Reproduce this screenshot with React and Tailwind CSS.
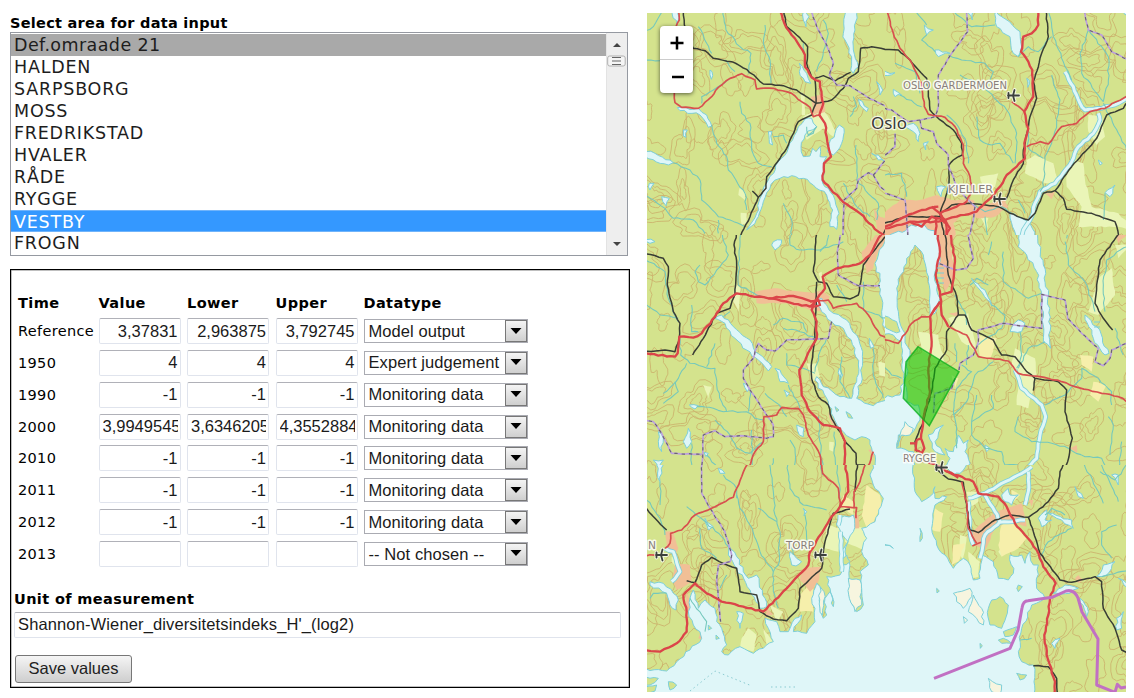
import React from "react";

const areas = ["Def.omraade 21", "HALDEN", "SARPSBORG", "MOSS", "FREDRIKSTAD", "HVALER", "RÅDE", "RYGGE", "VESTBY", "FROGN"];

const rows = [
  ["Reference", "3,37831", "2,963875", "3,792745", "Model output"],
  ["1950", "4", "4", "4", "Expert judgement"],
  ["1990", "-1", "-1", "-1", "Monitoring data"],
  ["2000", "3,9949545", "3,6346205", "4,3552884", "Monitoring data"],
  ["2010", "-1", "-1", "-1", "Monitoring data"],
  ["2011", "-1", "-1", "-1", "Monitoring data"],
  ["2012", "-1", "-1", "-1", "Monitoring data"],
  ["2013", "", "", "", "-- Not chosen --"],
];

/* ---------- map geometry: six tiles, three units per pixel ---------- */

const tiles = [
  {
    x: 640, y: 0, w: 735, h: 705,
    pale: ["490,350 545,325 570,360 585,390 580,410 550,385 500,420 488,400", "483,275 495,285 495,345 485,345", "300,560 318,580 315,600 295,585", "302,638 320,640 320,670 305,675"],
    pink: ["512,290 550,282 556,335 520,345", "700,625 720,650 750,655 750,705 715,700"],
    water: [
      "495,357 470,395 445,445 415,485 385,540 360,595 350,640 320,690 335,678 355,650 370,605 393,553 420,535 455,527 490,535 520,555 560,585 578,630 570,680 590,688 597,640 585,600 565,565 548,550 550,490 560,470 540,470 540,440 528,455 518,445 510,468 490,470 483,440 495,405 530,380 515,355",
      "598,375 612,385 605,430 580,465 562,455 568,430 585,400",
      "618,30 655,30 645,90 640,150 655,200 640,220 632,210 635,170 615,120 610,100",
      "112,323 175,325 200,345 215,378 205,382 180,345 120,332",
      "95,30 120,30 110,75", "22,453 45,460 100,488 85,495 22,465",
      "385,395 396,395 398,435 388,430", "65,590 88,595 78,617", "492,40 507,50 498,80 490,60",
      "478,190 500,220 512,250 495,245 478,215", "655,298 685,325 680,335 660,315", "130,390 142,390 138,412 130,408", "210,210 216,215 214,238",
      "710,245 728,270 720,285", "695,460 715,465 735,485 715,480", "28,550 42,550 30,570",
    ],
    rivers: ["250,40 258,90 300,140 333,160 325,220", "375,75 370,130 390,180 393,250", "175,80 200,130 215,160", "550,60 565,100 545,180 530,215", "22,180 60,182", "185,310 185,290 220,270 270,235", "300,305 305,340 330,370 335,450 355,490 395,500", "215,375 230,430 260,470 265,510 315,580 320,630", "100,488 150,510 180,540 185,600 235,650 315,680", "22,580 75,625 100,655 160,660 195,700", "235,700 235,660", "400,410 430,405 440,430", "648,435 650,540 715,610 710,660", "610,550 650,620 690,650", "430,610 455,660 455,705", "70,40 40,80 22,100", "490,130 497,180", "255,180 285,215", "500,380 505,405 530,380 520,400 500,410", "640,290 650,320 630,350"],
    rail: ["130,40 133,75 160,145 195,152 220,175 275,185 320,208 370,252 430,257 470,270 528,310", "528,310 525,240 515,232 500,190 503,140 470,105 440,80 430,40", "528,310 575,300 610,265 625,235 655,215 662,145 695,140 750,150", "525,235 550,227 585,243 632,217", "528,310 515,345 475,365 440,445 405,495 380,530 378,565 355,592 330,650 295,705", "355,592 337,573", "715,705 750,672"],
    dash: ["512,40 535,90 560,135 580,190 568,225 590,255 630,257 680,290 750,325", "750,580 720,560 700,525 685,518 655,540 650,565 612,600 608,705", "700,525 750,462"],
    road: ["418,40 433,70 455,105 480,140 495,165 495,200 515,232 540,245 545,290 550,310 538,345 555,370 560,410 565,440 573,470 552,490 548,540 570,565 610,607 660,640 715,695 750,705"],
    minor: ["115,40 118,60 105,90 103,280 105,308 125,322 175,325 215,290 235,262 270,235 305,221 345,240 350,267 400,265 455,280 485,305 510,322 520,350 540,345"],
  },
  {
    x: 885, y: 0, w: 723, h: 705,
    pale: ["425,480 450,465 505,490 520,545 480,550 420,520", "570,480 595,490 600,540 620,620 700,640 750,690 700,680 580,680 590,620 545,560 545,510", "610,345 650,350 660,410 635,435 610,395", "285,530 340,520 330,560 300,580", "285,650 310,655 305,690"],
    pink: ["0,650 45,600 105,600 155,585 200,600 265,600 280,620 360,600 370,620 330,650 280,655 240,640 205,670 215,705 60,705 0,705", "480,580 510,575 500,598"],
    water: ["333,30 350,50 405,95 410,140 400,170 385,160 375,110 335,80", "240,30 265,30 262,60", "118,75 145,90 125,105", "150,150 195,160 160,170", "25,268 50,285 30,290", "155,560 182,560 168,590", "60,380 85,370 105,400 100,425 85,395", "375,640 430,665 458,705 395,705", "0,705 30,698 62,692 80,675 118,675 128,688 148,692 150,705", "660,578 690,555 675,590", "115,430 130,425 122,450", "425,235 432,240 428,262", "640,480 652,490 645,495", "0,215 30,218 0,230", "708,30 722,30 722,55"],
    wide: ["640,340 645,360 625,400 580,440 560,485 510,550 465,575 450,610 440,650 415,690 410,705", "722,290 700,310 650,325 600,330 585,310 565,260 540,215"],
    rivers: ["85,40 125,75", "125,105 110,120 150,155", "190,165 230,180 300,190 325,215 310,250", "225,225 260,240 310,275 365,330 395,400 390,490", "275,350 285,420 320,435 345,430 385,490", "400,170 430,140 460,155 500,110", "505,110 540,200 560,240", "500,225 525,300 515,370 500,430 480,470 475,560 465,575", "430,390 430,445 475,475", "490,40 505,110", "610,90 585,160 590,220 655,305", "610,90 670,170 670,240 655,305", "655,310 700,400 722,475", "0,525 50,520 65,590", "30,190 90,215 105,280", "195,40 260,80 330,75", "45,285 110,320", "185,345 220,380 245,430 250,490", "660,580 655,660", "400,600 420,640", "300,650 310,705", "380,640 350,620 300,635 260,610"],
    rail: ["0,148 40,150 75,180 125,235 135,330 155,350 205,390 230,430 232,465 205,480 192,495 192,555 180,600 165,640 200,615 250,610 340,620 375,640 430,660 450,640 475,580 510,572 535,595 545,628 620,640 690,665 705,705", "510,572 560,500 635,415 665,345 715,325 722,290", "483,40 490,110 470,160 460,200 445,245 455,295 435,350 415,450 415,490 385,540 362,600", "165,650 60,650 0,675", "165,640 180,705"],
    dash: ["245,40 248,95 200,160 160,225 160,320 150,350 105,360 70,365 20,330 0,322", "105,360 110,385 145,395 155,430 190,465 190,495 215,560 250,600 270,620 265,660 250,705", "597,40 610,90 650,105 680,155 722,185", "0,480 30,440 30,400", "0,575 60,600 70,705"],
    road: ["460,40 460,75 440,100 415,110 408,155 430,185 442,210 445,290 418,335 430,385 418,430 420,475 395,500 365,525 345,560 310,600 275,635 215,650 160,665 75,665 0,690", "0,690 60,650 110,630 160,620", "75,665 110,680 140,650 180,660 190,705", "150,705 155,650", "140,620 165,640 195,685 175,705", "245,605 215,620 165,640 180,670"],
    minor: ["22,40 25,100 45,145 75,180 95,220 110,250 118,320 130,343 180,352 210,380 235,435 235,490 255,530 262,570 245,605", "380,305 418,335", "425,440 465,425 490,432 530,380 575,370 615,335 660,325 722,280"],
  },
  {
    x: 640, y: 235, w: 735, h: 690,
    pale: ["285,140 302,160 295,230 280,200", "500,385 530,385 540,425 515,440", "190,450 215,455 205,490", "715,380 735,385 735,425 718,420", "568,620 582,622 580,650 568,645", "535,115 545,110 545,160"],
    pink: ["345,170 400,160 520,175 545,165 570,185 545,230 510,225 440,205 350,205", "665,50 720,0 750,0 735,20 710,60 700,100 680,115", "565,530 585,560 600,580 575,565", "685,645 710,640 700,670"],
    water: [
      "750,0 735,20 715,60 705,85 708,110 720,115 715,150 725,190 728,270 740,285 750,290",
      "525,200 545,190 560,210 580,235 620,255 650,300 668,350 665,420 650,490 700,512 750,490 770,705 700,705 705,660 690,615 665,605 645,615 610,590 580,545 565,500 525,435 530,425 550,455 600,485 635,490 650,440 655,390 645,340 610,280 575,260 545,230",
      "225,250 245,240 280,275 330,315 345,350 395,395 385,408 355,375 320,345 285,310 255,265", "405,400 420,405 445,445 420,440", "400,20 425,15 418,35 405,45 395,30", "55,590 70,610 65,650 55,620", "145,580 155,620 140,640 130,620", "148,510 175,512 165,522", "470,570 492,580 490,605 478,600", "688,310 702,335 692,340", "310,445 328,460 322,470", "40,675 70,675 55,700", "22,5 45,20 30,25", "432,465 448,475 440,485", "598,400 608,420 600,435", "192,652 205,655 198,665",
    ],
    islands: ["618,530 638,550 625,548", "585,515 597,525 590,530"],
    rivers: ["22,65 75,110 85,190 115,260", "22,195 60,240 115,250", "240,0 265,60 240,95 195,150 175,140 165,110 180,90", "300,0 297,60 295,150 350,180 380,190", "450,0 450,30 480,45 540,45 580,30 610,20", "155,210 155,290 175,290", "120,310 122,360 150,385 190,395 225,400 230,450 245,500 260,530", "225,325 200,395", "140,385 115,430 70,475", "105,440 115,470 70,505", "170,515 220,520 250,530 320,530 345,550 370,555", "375,475 425,520 440,545", "440,355 440,390 490,400 525,415", "400,270 430,250 490,265 500,290", "430,280 480,290 530,310", "525,410 540,350 560,310", "605,365 600,440 630,490", "700,340 700,420 730,490", "590,150 620,200", "670,140 670,225 750,255", "225,555 270,600 290,640 330,655 370,620", "155,625 155,700", "200,660 250,705", "450,615 465,640 465,705", "535,545 540,620 550,705", "583,590 585,705", "445,450 480,520", "330,465 325,530", "335,585 340,705", "270,230 250,245", "390,705 400,670", "570,0 560,30 540,50"],
    rail: ["293,0 282,30 290,90 285,175 270,220 230,235 190,310 158,360", "22,52 70,70 85,95 82,150 100,230 120,265 118,310 105,350 75,345 22,350", "530,0 525,60 520,110 535,140 560,145 580,185 630,192 655,180 670,90 700,50 735,5", "530,140 525,310 515,380 515,430 535,485 565,510 575,550 620,625 648,655 650,705", "650,690 675,690"],
    dash: ["605,0 592,50 595,120 655,152 720,152", "575,260 565,310 440,315 405,348 380,345 355,325 345,350 340,370 310,405 310,430 330,465 370,525 400,570 400,605 380,610 300,602 255,605 225,587 190,600 185,705", "22,553 40,560 65,595 95,655 185,658"],
    road: ["22,355 105,365 113,355 118,305 160,308 185,295 225,245 250,205 290,175 385,190 460,183 525,200 515,225 530,260 530,310 500,365 478,405 485,480 510,530 550,570 600,580 615,620 612,705", "385,190 450,203 510,215 525,200 555,160 548,125 590,100 660,85 690,60 710,20 730,0", "510,200 535,195 540,210 512,215"],
    minor: ["525,200 565,195 580,220 620,210 650,205 685,240 720,300 750,310", "320,705 345,650 370,620 372,545 410,540 425,518 475,520 490,540 505,600 540,660 545,705", "700,650 675,705"],
  },
  {
    x: 885, y: 235, w: 723, h: 690,
    pale: ["100,290 160,300 165,330 180,385 110,345", "190,250 250,235 265,300 275,350 230,320", "390,340 450,370 455,420 430,520 395,510 400,440 380,390", "640,130 680,100 690,180 640,240 610,230", "190,25 205,70 200,90", "690,30 722,30 700,70"],
    yellow: ["280,300 335,310 315,375 285,365", "585,360 625,365 620,410 590,390", "625,440 665,450 640,500 615,480", "200,420 220,430 210,460"],
    pink: ["150,0 220,0 195,30 210,120 180,170 160,100", "190,235 220,230 220,245", "555,640 575,630 575,655", "690,0 722,0 700,25"],
    water: [
      "0,0 150,0 165,30 165,80 150,110 155,165 165,190 150,235 135,240 130,140 115,60 90,30 65,70 35,160 40,230 60,310 75,360 60,430 65,500 100,510 105,555 85,590 40,600 35,640 85,650 90,720 0,720 0,490 45,480 55,430 50,320 25,300 0,290",
      "400,0 455,0 475,90 490,180 497,340 475,320 470,180 455,110 425,60 400,35", "260,130 285,165 320,212 300,165", "375,290 400,255 420,265 410,290 385,290", "600,240 635,275 672,355 660,360 625,310",
      "205,650 220,600 235,625 250,615 240,650 255,685 240,720 170,705 195,670 180,640", "300,630 315,640 305,650", "130,600 175,570 150,620 180,660 150,650",
    ],
    islands: ["0,235 35,260 45,290 25,290 0,265"],
    cream: ["60,560 85,580 75,600 50,600 38,635 45,600"],
    wide: ["390,405 410,460 470,510 482,545 465,600 455,670 410,705"],
    rivers: ["355,50 355,140 400,170 430,190 470,175", "210,180 240,230 245,270", "255,150 275,130 310,150", "320,210 360,240 350,280 280,330", "540,20 550,90 600,140 630,230", "722,25 665,75 655,150 660,230", "690,280 715,360", "405,290 410,360 395,400", "480,320 430,340 400,400", "230,390 260,410 215,460 205,530 215,580 215,640", "325,380 270,420 245,500 205,540", "320,480 325,520 260,560 260,600 300,640 350,650 360,690 400,690", "400,545 390,590 440,620 500,625 550,640 600,665 650,670 675,705", "590,400 590,430 540,480 480,510", "590,400 640,430 680,470 680,510", "670,545 685,570 675,660", "0,380 20,420 50,430", "210,325 215,380", "250,330 245,390", "275,480 260,560", "710,620 700,700", "545,10 555,0", "320,20 310,60"],
    rail: ["180,0 190,120 215,185 220,240 240,240 260,285 325,315 350,360 390,365 425,410 450,430 520,440 545,465 540,530 562,610 548,680 530,705", "220,240 185,290 185,345 150,400 140,470 115,560 90,620 95,650", "450,430 445,467", "710,0 645,75 635,150 630,205 655,250 683,285"],
    dash: ["245,0 265,70 245,100 210,105 160,85", "222,405 225,385 265,360 280,320 280,285 355,265 470,280 470,178 540,195 548,250 590,295 640,340 630,380 655,392 675,370 680,345 722,318", "210,430 200,460 150,475 145,535"],
    road: ["155,0 165,50 152,120 165,170 170,240 190,275", "195,0 210,80 200,170 165,180", "165,200 135,245 140,320 130,400 135,470 115,550 108,610 118,640 110,655 92,645 95,615 108,610", "90,625 75,625", "130,683 155,692"],
    minor: ["0,310 40,325 80,265 110,245 135,245 165,200", "190,275 245,300 280,365 370,378 400,415 465,425 530,440 570,455 650,475 700,485 722,505"],
  },
  {
    x: 640, y: 465, w: 735, h: 681,
    pale: ["625,180 680,190 680,260 615,230", "560,180 600,190 595,260 555,250", "325,490 350,510 340,560 300,550 305,520", "370,490 400,530 380,540", "95,275 110,290 120,320 95,290", "390,420 430,440 410,470"],
    yellow: ["680,60 720,90 725,120 700,175 680,190 665,150", "480,390 520,350 520,440 480,440", "610,90 640,110 640,150 605,125"],
    pink: ["75,200 100,200 115,250 105,270 80,245", "105,295 150,300 155,350 110,375 98,345", "490,310 545,305 535,350 510,380 480,345", "640,150 655,150 658,190 635,190", "380,430 400,450 375,455", "140,380 155,440 135,440", "180,500 190,525 175,520"],
    water: [
      "22,615 80,618 110,590 150,555 185,520 180,500 160,480 145,440 150,400 160,375 175,430 195,405 225,430 230,470 245,490 260,540 245,560 265,570 300,545 340,565 370,550 400,530 385,490 375,460 410,470 420,500 445,500 465,460 485,450 460,500 500,505 525,470 525,430 515,400 530,355 545,380 540,420 550,460 560,450 555,400 570,380 580,425 570,370 560,335 600,330 610,280 600,260 625,230 590,180 600,160 640,150 640,200 615,260 630,300 630,400 650,440 670,420 665,370 660,320 685,300 665,260 680,220 665,190 705,170 730,100 700,60 690,30 705,0 770,0 770,700 0,700",
      "30,350 70,355 100,385 115,405 108,435 90,420 80,385 30,360", "265,240 290,275 325,340 350,330 375,400 380,425 360,430 330,375 290,310 265,270", "195,160 220,185 205,195", "450,260 470,280 485,290 468,303 455,300", "490,130 500,140 492,152", "45,0 70,0 60,50", "235,10 255,25 240,25", "290,440 310,445 300,490",
    ],
    islands: ["22,640 55,640 30,660 22,660", "22,668 50,660 45,678 22,690", "85,650 110,660 90,675", "205,480 215,490 205,495", "228,510 238,520 228,523", "620,270 600,290 605,300 630,290"],
    cream: ["625,340 660,345 665,420 645,440 628,400", "540,365 552,380 548,450 540,430"],
    wide: ["75,250 100,260 120,320 95,350", "600,150 595,180", "602,200 605,320"],
    rivers: ["22,80 60,160 75,210", "290,90 300,130 330,180 360,260 400,320 400,380 415,430", "385,0 400,80 405,150 420,200 415,300 400,320", "440,0 450,70 490,120 560,135", "355,130 410,170", "60,50 60,120", "250,30 290,70 290,100", "140,125 190,165 245,215 265,245", "180,190 185,250 230,280", "590,0 600,100", "495,150 505,250", "450,230 460,270", "150,400 200,470 195,500", "260,330 240,370", "540,0 548,30", "30,400 40,385 80,385"],
    rail: ["22,115 45,160 80,195", "140,347 165,353 185,300 215,277 250,295 290,310 300,380 350,390 360,440 400,462 440,467 475,430 480,370 545,310 555,230 580,145 630,132", "655,0 648,40 645,80", "650,0 675,0"],
    dash: ["185,0 185,85 210,130 255,200 275,270 270,290 235,300 230,350 242,470"],
    road: ["615,0 625,80 600,125 575,155 545,205 510,260 505,300 440,370 370,440 310,425 245,410 200,385 165,355 130,390 140,440 140,500 110,535 60,560 22,555"],
    minor: ["325,0 290,70 280,97 225,125 165,150 125,195 92,205 90,235 75,250", "22,272 55,270", "545,0 548,25 595,70 600,125 650,128 648,160", "680,0 660,50 642,80 642,130"],
  },
  {
    x: 885, y: 465, w: 723, h: 681,
    pale: ["250,260 285,290 280,335 260,340", "245,80 275,80 280,110 255,125", "340,260 355,240 350,275", "225,210 245,215 235,290 225,270"],
    yellow: ["350,180 375,165 425,220 400,250 350,275 340,240", "150,130 175,145 165,200 140,195", "205,240 240,235 220,290 200,300", "380,75 405,90 385,110"],
    pink: ["250,210 325,145 380,125 410,115 425,185 375,165 330,190 300,255 270,240 245,215", "430,105 445,105 440,125", "570,340 580,330 595,345 580,355"],
    water: [
      "0,0 85,0 90,80 110,110 145,85 150,65 150,100 185,95 150,120 140,190 155,240 180,270 205,310 235,280 255,300 265,345 285,340 290,270 325,290 340,340 370,345 385,325 375,270 410,270 420,295 435,260 445,300 460,300 455,370 480,400 440,420 410,490 400,560 410,590 445,600 450,700 0,700",
      "460,160 485,135 480,165 500,165 470,185", "490,145 560,165 565,190 530,165", "635,335 655,300 690,290 665,330", "700,340 720,350 722,385", "695,460 715,440 710,490 695,495", "585,400 610,440 605,455", "500,535 525,520 510,550", "500,385 540,360 580,370 555,385", "570,65 595,100 580,95", "680,40 700,30 700,60", "350,90 370,70 375,90 400,90 380,120 360,110", "170,0 248,0 225,25 205,30",
    ],
    cream: ["205,385 255,370 260,395 235,430 215,410", "265,390 290,430 295,480 275,460 250,440", "310,640 350,660 345,690 320,680", "235,455 248,465 238,475"],
    islands: ["320,405 345,395 370,420 350,490 315,480 310,430", "355,500 395,485 385,510 360,515", "395,625 425,630 405,645", "400,360 412,365 400,380", "105,190 112,220 105,230", "155,370 163,378 156,384", "285,535 292,542 286,550", "0,235 25,250 5,240", "340,525 355,520 380,535 350,535"],
    wide: ["250,100 300,85 350,55 400,40 440,5", "300,90 330,140 345,170 300,210 285,280", "430,20 430,80 420,120", "250,110 255,200 265,240", "345,172 420,165"],
    rivers: ["460,280 490,230 530,205 560,190", "590,0 640,80 655,115", "640,0 700,110", "645,20 690,45 722,0", "695,180 650,200 650,240 680,280", "650,335 722,315", "480,150 500,130 540,150", "405,525 440,520"],
    rail: ["150,10 190,42 235,52 255,195 280,203 330,165 375,150 430,157 455,140 490,110 520,70 525,20 543,0", "430,157 445,200 465,265 525,345 560,352 630,335 650,350 655,430 690,490 710,555 722,567", "445,602 490,605 515,640 520,705"],
    road: ["140,0 185,20 265,50 280,85 340,95 365,125 390,175 420,210 455,255 475,305 512,355 495,400 490,450 478,510 485,570 510,650 505,705", "185,18 220,38"],
    minor: ["230,50 245,110 250,190 275,235", "262,243 288,232"],
  },
];

function makeRandom(seed) {
  let s = seed;
  return () => {
    s = (s * 1664525 + 1013904223) % 4294967296;
    return s / 4294967296;
  };
}

function parse(str) {
  return str.split(" ").map((p) => {
    const [x, y] = p.split(",").map(Number);
    return [x <= 0 ? x - 15 : x === 22 ? 5 : x === 722 ? 738 : x, y <= 0 ? y - 15 : y === 40 ? 30 : y === 705 ? 720 : y];
  });
}

/* Splits long edges and nudges the new vertices so that lines look surveyed. */
function rough(str, amount, closed) {
  const pts = parse(str);
  const rnd = makeRandom(Math.round(pts[0][0] * 91 + pts[0][1] * 37 + pts.length * 13 + 9000));
  const out = [];
  const n = closed ? pts.length : pts.length - 1;
  for (let i = 0; i < n; i++) {
    const a = pts[i];
    const b = pts[(i + 1) % pts.length];
    const len = Math.hypot(b[0] - a[0], b[1] - a[1]) || 1;
    const steps = Math.max(1, Math.round(len / 13));
    out.push(a);
    for (let k = 1; k < steps; k++) {
      const t = k / steps;
      const d = (rnd() - 0.5) * 2 * amount;
      out.push([a[0] + (b[0] - a[0]) * t - ((b[1] - a[1]) / len) * d, a[1] + (b[1] - a[1]) * t + ((b[0] - a[0]) / len) * d]);
    }
  }
  if (!closed) out.push(pts[pts.length - 1]);
  return out.map((p) => p[0].toFixed(1) + "," + p[1].toFixed(1)).join(" ");
}

function buildContours() {
  const rnd = makeRandom(4711);
  const d = [];
  for (let gy = 18; gy < 700; gy += 34) {
    for (let gx = 652; gx < 1135; gx += 34) {
      if (rnd() < 0.12) continue;
      const cx = gx + (rnd() - 0.5) * 24;
      const cy = gy + (rnd() - 0.5) * 24;
      const base = 5 + rnd() * 9;
      const rings = 1 + Math.floor(rnd() * 2.3);
      const sx = 0.65 + rnd() * 0.6;
      const ph = [rnd() * 6.3, rnd() * 6.3, rnd() * 6.3, rnd() * 6.3];
      for (let r = 0; r < rings; r++) {
        const rad = base + r * 5.5;
        let path = "";
        for (let i = 0; i < 30; i++) {
          const a = (i / 30) * Math.PI * 2;
          const w = 1 + 0.3 * Math.sin(2 * a + ph[0]) + 0.17 * Math.sin(3 * a + ph[1]) + 0.13 * Math.sin(5 * a + ph[2]) + 0.08 * Math.sin(8 * a + ph[3] + r);
          path += (i ? "L" : "M") + (cx + Math.cos(a) * rad * w * sx).toFixed(1) + " " + (cy + (Math.sin(a) * rad * w) / sx).toFixed(1);
        }
        d.push(path + "Z");
      }
    }
  }
  return d.join("");
}

const contours = buildContours();

const polys = (list, fill) => (list || []).map((p, i) => <polygon key={fill + i} points={rough(p, 2, true)} fill={fill} />);
const shores = (list, fill) => (list || []).map((p, i) => <polygon key={fill + i} points={rough(p, 4.5, true)} fill={fill} stroke="#7dcfd8" strokeWidth="3" />);
const lines = (list, amount, color, width, extra) => (list || []).map((p, i) => <polyline key={color + width + i} points={rough(p, amount, false)} fill="none" stroke={color} strokeWidth={width} strokeLinejoin="round" {...extra} />);

function Tile({ t, id }) {
  return (
    <g transform={`translate(${t.x} ${t.y}) scale(0.33333)`}>
      <clipPath id={id}><rect width={t.w} height={t.h} /></clipPath>
      <g clipPath={`url(#${id})`}>
        {polys(t.pale, "#eaf5b7")}
        {polys(t.yellow, "#f6efab")}
        {polys(t.pink, "#f1bf96")}
        {shores(t.water, "#dff6f8")}
        {shores(t.islands, "#d4e38d")}
        {shores(t.cream, "#f7f5df")}
        {lines(t.wide, 2, "#7dcfd8", 14)}
        {lines(t.wide, 2, "#dff6f8", 9)}
        {lines(t.rivers, 3, "#74c8bc", 3.2)}
        {lines(t.rail, 1.5, "#393d35", 4.5)}
        {lines(t.dash, 1, "#bda0de", 5)}
        {lines(t.dash, 1, "#6a6570", 3.4, { strokeDasharray: "10 12" })}
        {lines(t.minor, 2, "#d8504f", 5)}
        {lines(t.road, 2, "#db4549", 7)}
      </g>
    </g>
  );
}

function Plane({ x, y }) {
  return (
    <g transform={`translate(${x} ${y})`} strokeLinecap="round">
      <path d="M-5 0H6M1.5-5.5L0 0L1.5 5.5M-4.5-2.5V2.5" fill="none" stroke="#fff" strokeOpacity=".7" strokeWidth="4" />
      <path d="M-5 0H6M1.5-5.5L0 0L1.5 5.5M-4.5-2.5V2.5" fill="none" stroke="#3c403c" strokeWidth="1.8" />
    </g>
  );
}

function Place({ x, y, w, children }) {
  return (
    <text x={x} y={y} textLength={w} lengthAdjust="spacingAndGlyphs" fontSize="10.5" fill="#8a807b" stroke="#fff" strokeOpacity=".85" strokeWidth="3" strokeLinejoin="round" paintOrder="stroke">
      {children}
    </text>
  );
}

function MapView() {
  return (
    <div className="relative h-[679px] w-[479px] shrink-0 overflow-hidden bg-[#d4e38d]">
      <svg viewBox="647 13 479 679" width="479" height="679" className="block font-['DejaVu_Sans',sans-serif]">
        <path d={contours} fill="none" stroke="#cbb16c" strokeOpacity=".85" strokeWidth="1" />
        {tiles.map((t, i) => <Tile key={i} t={t} id={"tile" + i} />)}
        <path d="M690 691L715 671L752 686M771 687H796" fill="none" stroke="#8bcbd1" strokeWidth="1" strokeDasharray="1.5 3" />
        <path d="M937 268h7M937 273h7M937 278h7M938 283h6M1094 322h6M1094 327h6" stroke="#79cdd8" strokeWidth="1" />
        <path d="M934 678.3L1010 648.3L1018 630L1022 608Q1023 601 1028 600.8L1052 597.3L1066 591Q1074 589 1078 598L1082 612L1098 639L1096.700 685L1115 692.3L1117.300 684.300L1121 688L1126 687" fill="none" stroke="#c170c3" strokeWidth="3" strokeLinejoin="round" />
        <Plane x={1013} y={95.500} />
        <Plane x={999} y={199} />
        <Plane x={941} y={467.500} />
        <Plane x={820} y={555} />
        <Plane x={661} y={555} />
        <Place x={903} y={89} w={104}>OSLO GARDERMOEN</Place>
        <Place x={948} y={192.500} w={45}>KJELLER</Place>
        <Place x={903} y={461.500} w={33}>RYGGE</Place>
        <Place x={786} y={548.500} w={28}>TORP</Place>
        <Place x={648} y={548.500} w={8}>N</Place>
        <text x="871" y="129" textLength="36" lengthAdjust="spacingAndGlyphs" fontSize="16" fill="#383838" stroke="#fff" strokeOpacity=".75" strokeWidth="2.500" strokeLinejoin="round" paintOrder="stroke" className="font-['Noto_Sans',sans-serif]">Oslo</text>
        <path d="M918 346.700L959 371.700L929.300 425.700L903.300 398.300L906 361.700Z" fill="#00c400" fillOpacity=".52" stroke="#06ad18" strokeOpacity=".75" strokeWidth="1.500" />
      </svg>
      <div className="absolute left-[13px] top-[13px] flex h-[67px] w-[33px] flex-col rounded bg-white shadow-[0_1px_4px_rgba(0,0,0,0.6)]">
        <button className="flex h-[34px] items-center justify-center border-b border-[#ccc]" aria-label="Zoom in">
          <svg width="14" height="14" viewBox="0 0 14 14"><path d="M.5 7H13.500M7 .5V13.500" stroke="#000" strokeWidth="2.500" /></svg>
        </button>
        <button className="flex h-[33px] items-center justify-center pl-0.5" aria-label="Zoom out">
          <svg width="12" height="4" viewBox="0 0 12 4"><path d="M0 2H12" stroke="#000" strokeWidth="2.500" /></svg>
        </button>
      </div>
    </div>
  );
}

function AreaList() {
  return (
    <div className="mt-px flex h-[224px] w-[618px] border-[1.500px] border-[#9599a1] bg-white">
      <ul className="w-[595px] pt-px text-[17.500px] leading-[23px] tracking-[0.780px] text-[#1d1d1d]">
        {areas.map((a, i) => (
          <li key={a} className={i === 0 ? "h-[22px] bg-[#a9a9a9] pl-[3px] leading-[22px] tracking-[0.420px]" : i === 8 ? "h-[22px] border-y border-[#70b4fb] bg-[#3498ff] pl-[3px] leading-[22px] text-white" : "h-[22px] pl-[3px]"}>{a}</li>
        ))}
      </ul>
      <div className="flex flex-1 flex-col items-center border-l border-[#e3e3e3] bg-[#eeeeee] py-2">
        <svg width="20" height="26" viewBox="0 0 20 26">
          <path d="M6 6L10 2L14 6Z" fill="#444" />
          <rect x=".7" y="15" width="17.500" height="10" rx="2" fill="#f5f5f5" stroke="#b0b0b0" />
          <path d="M5 16.500H14M5 20H14M5 23.500H14" stroke="#666" strokeWidth="1.200" />
        </svg>
        <svg width="10" height="5" viewBox="0 0 10 5" className="mt-auto"><path d="M1 0H9L5 4Z" fill="#444" /></svg>
      </div>
    </div>
  );
}

const field = "block rounded-[2px] border border-[#e0e4ed] border-t-[#b0b1b8] bg-white font-['Liberation_Sans',Arial,sans-serif] text-[16.500px] text-[#1a1a1a] outline-none";

function TypeSelect({ value }) {
  return (
    <div className="flex h-6 w-[164px] items-center border border-[#aaabb2] bg-white font-['Liberation_Sans',Arial,sans-serif] text-[16.500px] text-[#1a1a1a]">
      <span className="flex-1 whitespace-nowrap pl-1 tracking-[0.080px]">{value}</span>
      <span className="flex h-[22px] w-[22px] shrink-0 items-center justify-center border-[1.500px] border-[#777] bg-gradient-to-b from-[#f4f4f4] to-[#cfcfcf]">
        <svg width="12" height="7" viewBox="0 0 12 7"><path d="M.5 0H11.500L6 6Z" fill="#000" /></svg>
      </span>
    </div>
  );
}

export default function App() {
  return (
    <main className="flex h-[698px] w-[1134px] overflow-hidden bg-white pl-[10px] pt-[13px] font-['DejaVu_Sans',Verdana,sans-serif] text-black">
      <div className="mr-[17px] w-[620px] shrink-0">
        <h1 className="h-[18px] whitespace-nowrap text-[14.500px] font-bold leading-[20px] tracking-[0.270px]">Select area for data input</h1>
        <AreaList />
        <section className="mt-[13px] h-[419px] border border-black shadow-[inset_0_0_0_0.500px_rgba(0,0,0,0.500)]">
          <div className="grid h-[48px] grid-cols-[80.500px_88.500px_88.500px_88px_1fr] items-end pb-[5px] pl-[7px] text-[14.500px] font-bold leading-[19px] tracking-[0.400px]">
            <span>Time</span><span>Value</span><span>Lower</span><span>Upper</span><span>Datatype</span>
          </div>
          {rows.map((r) => (
            <div key={r[0]} className="grid h-[31.850px] grid-cols-[80.500px_88.500px_88.500px_88px_1fr] pl-[7px] text-[14.500px]">
              <span className="pt-[3px] leading-[21px] tracking-[0.330px]">{r[0]}</span>
              {[1, 2, 3].map((c) => (
                <input key={c} readOnly value={r[c]} className={field + " h-[26px] w-[82px] pl-[3px] pr-[2px] text-right"} />
              ))}
              <div className="pt-px"><TypeSelect value={r[4]} /></div>
            </div>
          ))}
          <h2 className="mt-[16px] pl-[3px] text-[14.500px] font-bold leading-[20px] tracking-[0.370px]">Unit of measurement</h2>
          <input readOnly value="Shannon-Wiener_diversitetsindeks_H'_(log2)" className={field + " ml-[3px] mt-[3px] h-[26px] w-[607px] px-[3px] tracking-[0.130px]"} />
          <button className="ml-1 mt-[17px] block h-7 w-[117px] rounded-[3px] border border-[#777] bg-gradient-to-b from-[#f5f5f5] to-[#cecece] font-['Liberation_Sans',Arial,sans-serif] text-[16.500px] text-[#222]">Save values</button>
        </section>
      </div>
      <MapView />
    </main>
  );
}
